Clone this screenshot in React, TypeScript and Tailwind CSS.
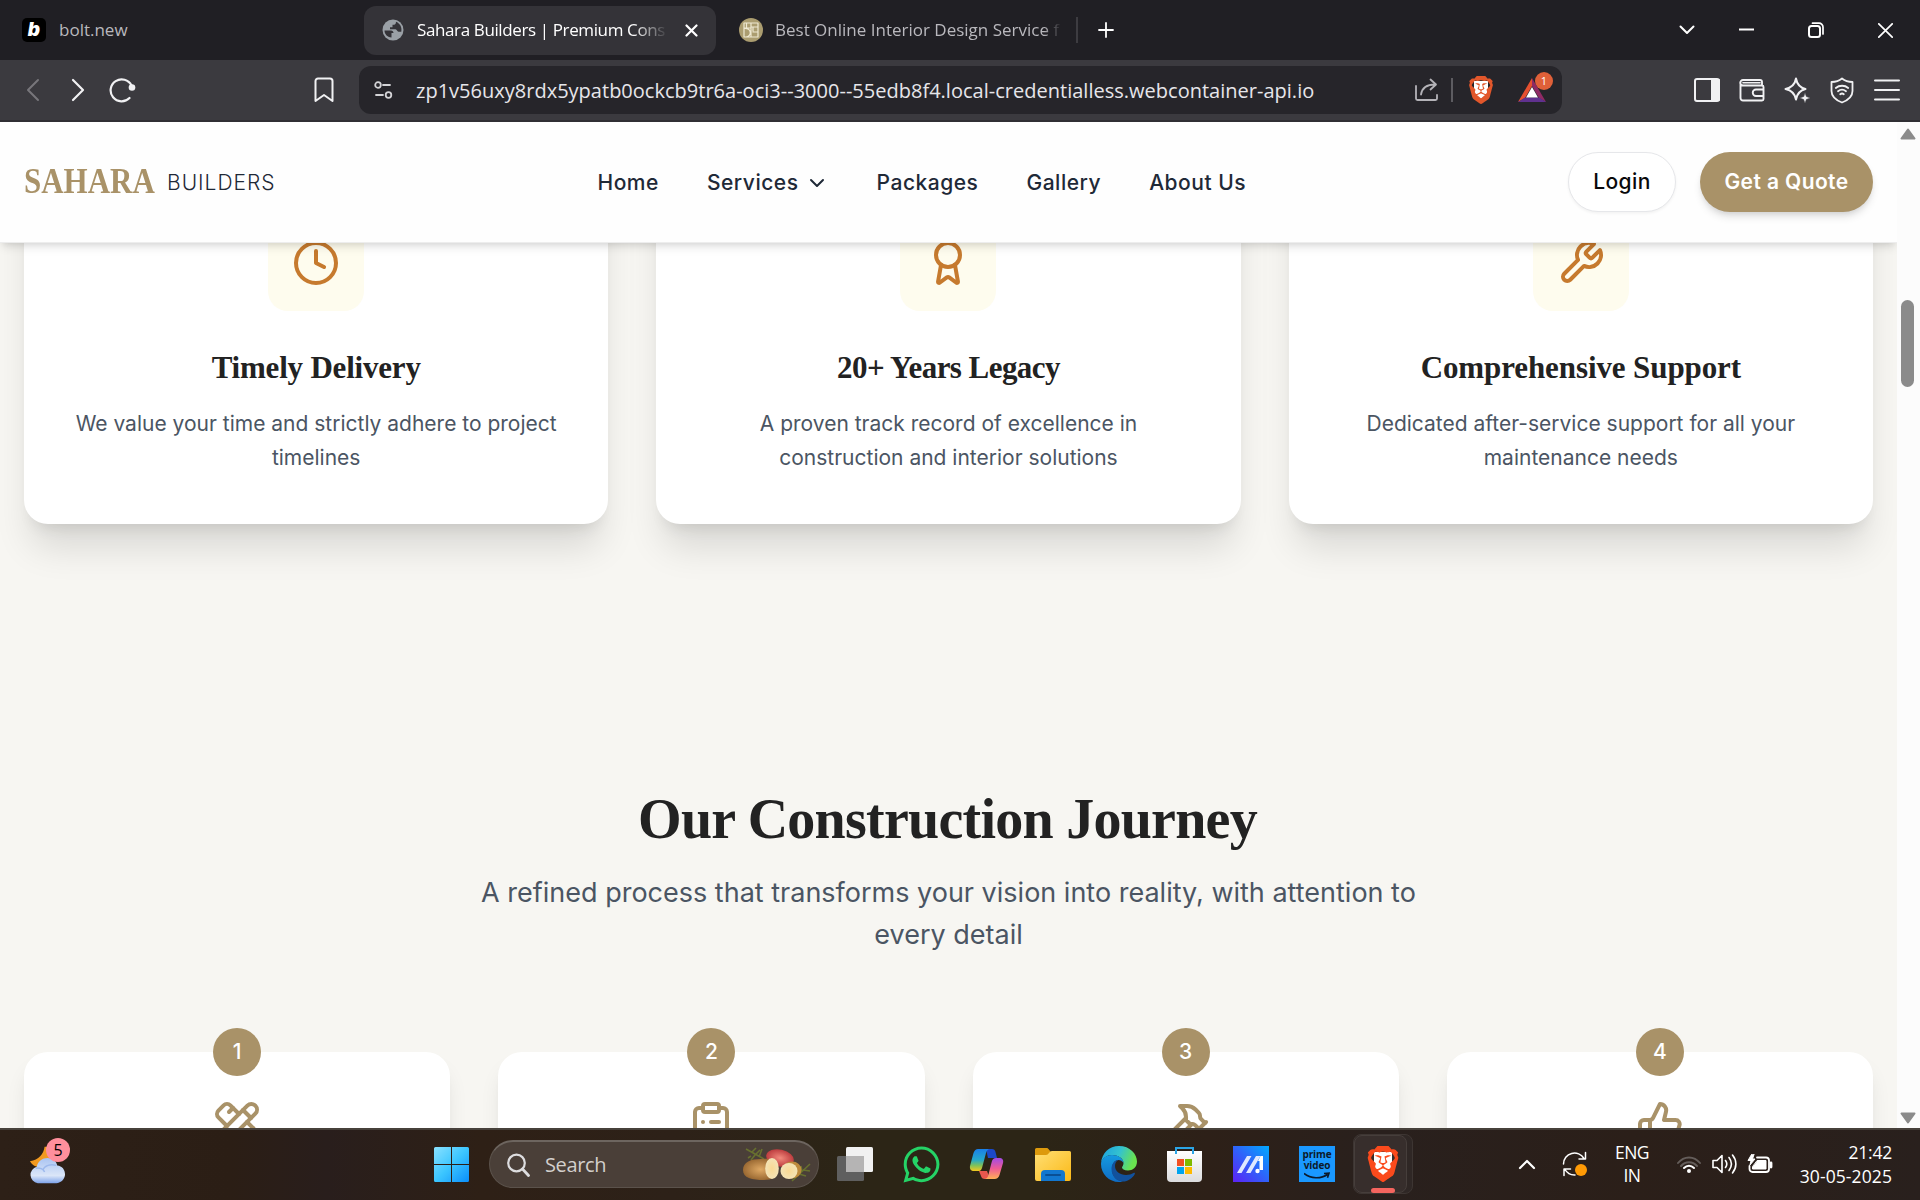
import type { ReactNode } from "react";
import { Award, ChevronDown, ClipboardList, Hammer, PencilRuler, ThumbsUp } from "lucide-react";
import { FaWhatsapp } from "react-icons/fa";
import { SiBrave } from "react-icons/si";

const UI = "font-['Open_Sans',sans-serif]";
const SERIF = "font-['Liberation_Serif',serif] font-bold";

type BoxProps = { w: number; h: number; className?: string; children: ReactNode };

function Glyph({ w, h, className = "", children }: BoxProps) {
  return (
    <svg
      width={w}
      height={h}
      viewBox={`0 0 ${w} ${h}`}
      fill="none"
      stroke="currentColor"
      strokeWidth={2}
      strokeLinecap="round"
      strokeLinejoin="round"
      className={`block shrink-0 ${className}`}
    >
      {children}
    </svg>
  );
}

function BraveLogo({ className, faceClass, color }: { className: string; faceClass: string; color: string }) {
  return (
    <span className={`relative flex shrink-0 items-center justify-center ${className}`}>
      <span className={`absolute bg-white ${faceClass}`} />
      <SiBrave className="relative h-full w-full" color={color} />
    </span>
  );
}

function TabStrip() {
  return (
    <div className={`flex h-[60px] items-center bg-[#201f24] text-[17px] text-[#b9b8bd] ${UI}`}>
      <div className="flex w-[364px] shrink-0 items-center pl-[22px]">
        <div className="flex h-6 w-6 items-center justify-center rounded-[5px] bg-black font-['Inter'] text-[19px] leading-none font-black text-white italic">
          <span className="-mt-0.5">b</span>
        </div>
        <span className="ml-[13px]">bolt.new</span>
      </div>
      <div className="flex h-[49px] w-[352px] shrink-0 items-center rounded-xl bg-[#343338] text-white">
        <Glyph w={22} h={22} className="ml-[18px]">
          <circle cx="11" cy="11" r="10.5" fill="#9aa0a6" stroke="none" />
          <path d="M2.500 11.500H9c1.500 0 2.500 1 2.500 2.500H9.500v4.500C5 18 2.500 15 2.500 11.500z" fill="#343338" stroke="none" />
          <path d="M14 2.800c0 2.500-1 3-3.500 3v2.400H8v2h5.500c1.500 0 1.500 2.500 3 2.500h2.800c1-5-1.800-8.500-5.300-9.900z" fill="#343338" stroke="none" />
        </Glyph>
        <div className="ml-[13px] w-[251px] overflow-hidden whitespace-nowrap tracking-[-0.38px] [mask-image:linear-gradient(to_right,#000_86%,transparent)]">
          Sahara Builders | Premium Cons
        </div>
        <Glyph w={13} h={13} className="ml-[17px]">
          <path d="M1.500 1.500l10 10M11.500 1.500l-10 10" strokeWidth="2.200" />
        </Glyph>
      </div>
      <div className="flex w-[362px] shrink-0 items-center border-r-2 border-[#3d3c41] pl-[23px]">
        <Glyph w={24} h={24}>
          <circle cx="12" cy="12" r="12" fill="#ab9d70" stroke="none" />
          <path d="M5 5h14v14H5zM5 10h7M12 5v14M12 9h7M14 14h5M14 9v4M5 10.500c8-1 8 8 2 8.500M7.500 5v5" stroke="#efe9d2" strokeWidth="1.200" />
        </Glyph>
        <div className="ml-[12px] w-[286px] overflow-hidden whitespace-nowrap [mask-image:linear-gradient(to_right,#000_94%,transparent)]">
          Best Online Interior Design Service f
        </div>
      </div>
      <Glyph w={16} h={16} className="ml-5 text-white">
        <path d="M8 1v14M1 8h14" strokeWidth="1.800" />
      </Glyph>
      <div className="ml-auto flex items-center pr-[27px] text-white">
        <Glyph w={16} h={10}>
          <path d="M1.500 1.500L8 8l6.500-6.500" />
        </Glyph>
        <Glyph w={16} h={16} className="ml-11">
          <path d="M0 7.500h15" strokeLinecap="butt" />
        </Glyph>
        <Glyph w={16} h={16} className="ml-[53px]">
          <rect x="1" y="4" width="11" height="11" rx="2.500" />
          <path d="M4.500 1.200H11a4 4 0 0 1 4 4V12" strokeWidth="1.700" />
        </Glyph>
        <Glyph w={15} h={15} className="ml-[54px]">
          <path d="M.8.8l13.400 13.400M14.200.8L.8 14.200" strokeWidth="1.700" />
        </Glyph>
      </div>
    </div>
  );
}

function Toolbar() {
  return (
    <div className="flex h-[62px] items-center border-b-2 border-[#302f34] bg-[#3b3a3f] text-[#f1f1f3]">
      <Glyph w={14} h={24} className="ml-[26px] text-[#77767b]">
        <path d="M12 2L2 12l10 10" />
      </Glyph>
      <Glyph w={14} h={24} className="ml-[31px]">
        <path d="M2 2l10 10L2 22" strokeWidth="2.200" />
      </Glyph>
      <Glyph w={27} h={26} className="ml-6">
        <path d="M22.500 8.500A11 11 0 1 0 20.500 21" strokeWidth="2.200" />
        <circle cx="23" cy="10.500" r="3.300" fill="currentColor" stroke="none" />
      </Glyph>
      <Glyph w={20} h={26} className="ml-[178px]">
        <path d="M1.500 24V4a2.500 2.500 0 0 1 2.500-2.500h12A2.500 2.500 0 0 1 18.500 4v20L10 18z" />
      </Glyph>
      <div className="ml-[25px] flex h-12 w-[1203px] shrink-0 items-center rounded-xl bg-[#26252a]">
        <Glyph w={19} h={18} className="ml-[15px] text-[#d4d4d7]">
          <circle cx="4" cy="4" r="2.800" strokeWidth="1.800" />
          <path d="M9 4h7M2 14h7" strokeWidth="1.800" />
          <circle cx="14.500" cy="14" r="2.800" strokeWidth="1.800" />
        </Glyph>
        <span className={`ml-[23px] w-[999px] pt-px text-xl tracking-[0.012px] whitespace-nowrap text-[#e6e6ea] ${UI}`}>
          zp1v56uxy8rdx5ypatb0ockcb9tr6a-oci3--3000--55edb8f4.local-credentialless.webcontainer-api.io
        </span>
        <Glyph w={23} h={24} className="text-[#b4b3b8]">
          <path d="M1 8v12.500A1.500 1.500 0 0 0 2.500 22h18a1.500 1.500 0 0 0 1.500-1.500V17M6 16.500C7 10 11 6.500 20 6.500M15.500 1.500l5.500 5-5.500 5" strokeWidth="1.800" />
        </Glyph>
        <div className="ml-[13px] h-6 w-0.5 bg-[#5d5c61]" />
        <BraveLogo className="ml-[14px] h-7 w-7" faceClass="h-[19px] w-[14px] rounded-b-lg" color="#e2572b" />
        <div className="relative ml-[23px] h-[26px] w-8">
          <Glyph w={28} h={26}>
            <path d="M14 1L0 25l7-4 7-12z" fill="#e5502f" stroke="none" />
            <path d="M14 1l14 24-7-4-7-12z" fill="#8f2a63" stroke="none" />
            <path d="M0 25h28l-7-4.500H7z" fill="#60318f" stroke="none" />
            <path d="M14 10l6 10.500H8z" fill="#fff" stroke="none" />
          </Glyph>
          <div className={`absolute -top-[5px] left-[17px] flex h-[18px] w-[18px] items-center justify-center rounded-full bg-[#df6039] text-[11px] text-white ${UI}`}>
            1
          </div>
        </div>
      </div>
      <Glyph w={26} h={24} className="ml-[132px]">
        <rect x="1" y="1" width="24" height="22" rx="2" />
        <path d="M18 2h7v20h-7z" fill="currentColor" />
      </Glyph>
      <Glyph w={26} h={24} className="ml-[19px]">
        <path d="M23 7.500V4a2 2 0 0 0-2-2H4a2.500 2.500 0 0 0 0 5.500h19a1.500 1.500 0 0 1 1.500 1.500v12a1.500 1.500 0 0 1-1.500 1.500H4A2.500 2.500 0 0 1 1.500 20V4.500M24 11.500h-7a3.200 3.200 0 0 0 0 6.500h7" strokeWidth="1.900" />
        <path d="M4 4.800h17" strokeWidth="1.600" />
      </Glyph>
      <Glyph w={26} h={26} className="ml-[19px]">
        <path d="M12 1.500c1 6 3.500 9 9.500 10.500-6 1.500-8.500 4.500-9.500 10.500-1-6-4-9-10.500-10.500C8 10.500 11 7.500 12 1.500z" />
        <path d="M21 15.500l1.400 4L26.500 21l-4.100 1.500L21 26.500l-1.400-4L15.500 21l4.100-1.500z" fill="currentColor" stroke="#3b3a3f" strokeWidth=".6" />
      </Glyph>
      <Glyph w={24} h={27} className="ml-5">
        <path d="M12 1.500c3 2.500 6 3.500 10.500 3.500v9c0 5.500-4 9-10.500 11.500C5.500 23 1.500 19.500 1.500 14V5C6 5 9 4 12 1.500z" strokeWidth="1.800" />
        <path d="M5.800 11c3.500-3 9-3 12.400 0M8 14.200c2.500-2 5.500-2 8 0M10.200 17.200c1.200-.9 2.500-.9 3.600 0" strokeWidth="1.800" />
      </Glyph>
      <Glyph w={26} h={22} className="ml-5">
        <path d="M1 1.500h24M1 11h24M1 20.500h24" />
      </Glyph>
    </div>
  );
}

function SiteHeader() {
  return (
    <header className="relative z-10 flex h-[121px] shrink-0 items-center border-b border-[#ededed] bg-[#fefefe] px-6 font-['Inter',sans-serif] text-[21px] font-medium tracking-[0.52px] text-[#1f2937] shadow-[0_6px_9px_-1.5px_rgba(0,0,0,0.1),0_3px_6px_-3px_rgba(0,0,0,0.1)]">
      <div className="flex w-[573.5px] shrink-0 items-center">
        <div className="w-[131px] pt-px">
          <span className={`inline-block origin-left scale-x-[0.86] text-[36px] leading-none tracking-normal text-[#a99268] ${SERIF}`}>
            SAHARA
          </span>
        </div>
        <span className="ml-3 pt-px font-light tracking-[1px]">BUILDERS</span>
      </div>
      <nav className="flex items-center gap-12 pt-px whitespace-nowrap">
        <span>Home</span>
        <span className="flex items-center gap-1.5">
          Services
          <ChevronDown size={24} strokeWidth={2} />
        </span>
        <span>Packages</span>
        <span>Gallery</span>
        <span>About Us</span>
      </nav>
      <div className="ml-auto flex items-center gap-6 whitespace-nowrap">
        <div className="flex h-[60px] w-[108px] items-center justify-center rounded-full border-[1.5px] border-[#e6e7ea] bg-white tracking-[0.4px] text-[#09090b] shadow-[0_1.5px_3px_rgba(0,0,0,0.05)]">
          Login
        </div>
        <div className="flex h-[60px] w-[173px] items-center justify-center rounded-full bg-[#a99268] font-semibold tracking-[0.4px] text-white shadow-[0_6px_9px_-1.5px_rgba(0,0,0,0.12),0_3px_6px_-3px_rgba(0,0,0,0.12)]">
          Get a Quote
        </div>
      </div>
    </header>
  );
}

function ClockIcon() {
  return (
    <svg width="48" height="48" viewBox="0 0 24 24" fill="none" stroke="currentColor" strokeWidth="2" strokeLinecap="round" strokeLinejoin="round">
      <circle cx="12" cy="12" r="10" />
      <polyline points="12 6 12 12 16 14" />
    </svg>
  );
}

function WrenchIcon() {
  return (
    <svg width="48" height="48" viewBox="0 0 24 24" fill="none" stroke="currentColor" strokeWidth="2" strokeLinecap="round" strokeLinejoin="round">
      <path d="M14.700 6.300a1 1 0 0 0 0 1.400l1.600 1.600a1 1 0 0 0 1.400 0l3.770-3.770a6 6 0 0 1-7.940 7.940l-6.910 6.910a2.120 2.120 0 0 1-3-3l6.910-6.910a6 6 0 0 1 7.940-7.940l-3.760 3.760z" />
    </svg>
  );
}

type FeatureProps = { icon: ReactNode; title: string; tracking: string; lines: string[] };

function FeatureCard({ icon, title, tracking, lines }: FeatureProps) {
  return (
    <article className="flex h-[357px] flex-col items-center rounded-3xl bg-white pt-12 text-center shadow-[0_30px_37.5px_-7.5px_rgba(0,0,0,0.12),0_12px_15px_-9px_rgba(0,0,0,0.1)]">
      <div className="flex h-24 w-24 shrink-0 items-center justify-center rounded-[20px] bg-[#fefcee] text-[#c67a2e]">
        {icon}
      </div>
      <h3 className={`mt-9 text-[31px] leading-[42px] whitespace-nowrap text-[#222] ${SERIF} ${tracking}`}>{title}</h3>
      <p className="mt-[18px] text-[21px] leading-[34px] text-[#4b5563]">
        {lines.map((line) => (
          <span key={line} className="block whitespace-nowrap">
            {line}
          </span>
        ))}
      </p>
    </article>
  );
}

const features: FeatureProps[] = [
  {
    icon: <ClockIcon />,
    title: "Timely Delivery",
    tracking: "tracking-[-0.2px]",
    lines: ["We value your time and strictly adhere to project", "timelines"],
  },
  {
    icon: <Award size={48} />,
    title: "20+ Years Legacy",
    tracking: "tracking-[-0.55px]",
    lines: ["A proven track record of excellence in", "construction and interior solutions"],
  },
  {
    icon: <WrenchIcon />,
    title: "Comprehensive Support",
    tracking: "tracking-[-0.1px]",
    lines: ["Dedicated after-service support for all your", "maintenance needs"],
  },
];

const steps = [PencilRuler, ClipboardList, Hammer, ThumbsUp];

function Page() {
  return (
    <div className="flex h-[1006px] w-[1897px] shrink-0 flex-col overflow-hidden bg-[#f7f6f2] font-['Inter',sans-serif]">
      <SiteHeader />
      <main className="min-h-0 flex-1 overflow-hidden">
        <section className="-mt-[76px] grid grid-cols-3 gap-12 px-6">
          {features.map((f) => (
            <FeatureCard key={f.title} {...f} />
          ))}
        </section>
        <section className="mt-[265px] text-center">
          <h2 className={`pr-0.5 text-[56px] leading-[60px] tracking-[-0.75px] text-[#222] ${SERIF}`}>Our Construction Journey</h2>
          <p className="mt-[23px] text-[27px] leading-[42px] text-[#4b5563]">
            <span className="block">A refined process that transforms your vision into reality, with attention to</span>
            <span className="block">every detail</span>
          </p>
        </section>
        <section className="mt-24 grid grid-cols-4 gap-12 px-6">
          {steps.map((Icon, i) => (
            <article
              key={i}
              className="relative flex h-[300px] flex-col items-center rounded-3xl bg-white pt-12 text-[#a99268] shadow-[0_15px_22.5px_-4.500px_rgba(0,0,0,0.1),0_6px_9px_-6px_rgba(0,0,0,0.1)]"
            >
              <div className="absolute -top-6 flex h-12 w-12 items-center justify-center rounded-full bg-[#a99268] text-[21px] font-medium text-white">
                {i + 1}
              </div>
              <Icon size={48} />
            </article>
          ))}
        </section>
      </main>
    </div>
  );
}

function Scrollbar() {
  return (
    <div className="flex h-[1006px] flex-1 flex-col items-center bg-[#fcfcfc] pt-1.5 pb-[4px] pr-0.5 text-[#8b8b8b]">
      <Glyph w={16} h={12}>
        <path d="M8 1.500L14.500 10.500h-13z" fill="currentColor" />
      </Glyph>
      <div className="mt-40 h-[87px] w-[13px] rounded-full bg-[#8b8b8b]" />
      <Glyph w={16} h={12} className="mt-auto">
        <path d="M8 10.500L1.500 1.500h13z" fill="currentColor" />
      </Glyph>
    </div>
  );
}

function WeatherWidget() {
  return (
    <div className="relative ml-[29px] h-[52px] w-11 shrink-0">
      <svg width="37" height="41" viewBox="0 0 38 44" preserveAspectRatio="none" className="mt-1.5 block">
        <defs>
          <linearGradient id="cloud" x1="0" y1="0" x2="0" y2="1">
            <stop offset="0" stopColor="#aac4f2" />
            <stop offset=".7" stopColor="#dbe6f8" />
            <stop offset="1" stopColor="#7fa4ea" />
          </linearGradient>
        </defs>
        <path d="M16 3c-1 8-6 14-15 15.500 3 6 10 8 17 5s9-9 7-15S18 3 16 3z" fill="#f29a20" />
        <path d="M9 42a9 9 0 0 1-1-17.500C9 18 14 15 19 15c5 0 9 3 10 8 5 .5 8 4.500 8 9.500S33 42 28 42z" fill="url(#cloud)" />
        <path d="M7 26c4-1 8 1 9 4M14 28c2-5 8-7 14-5" stroke="#9db9ec" strokeWidth="1.500" fill="none" />
      </svg>
      <div className={`absolute top-0 left-[17px] flex h-6 w-6 items-center justify-center rounded-full bg-[#ff8f9c] text-base text-black ${UI}`}>
        5
      </div>
    </div>
  );
}

function Potatoes() {
  return (
    <svg width="70" height="36" viewBox="0 0 70 36" className="block shrink-0">
      <defs>
        <radialGradient id="skin">
          <stop offset="0" stopColor="#dfa964" />
          <stop offset="1" stopColor="#9b6a33" />
        </radialGradient>
        <radialGradient id="flesh">
          <stop offset="0" stopColor="#f9d994" />
          <stop offset="1" stopColor="#f3e3b6" />
        </radialGradient>
        <radialGradient id="red">
          <stop offset="0" stopColor="#f28a7c" />
          <stop offset="1" stopColor="#bd3d3f" />
        </radialGradient>
      </defs>
      <path d="M4 2l18 10M9 9l-3 2M10 5l4-4M13 8l5-5M17 10l3-8M13 8l-4 5M50 34l18-17M57 27l7 2M61 23l7 1M60 25l-1-6" stroke="#67702f" strokeWidth="1.600" fill="none" />
      <ellipse cx="38" cy="11" rx="14" ry="8.500" fill="url(#red)" transform="rotate(12 38 11)" />
      <path d="M1 23c0-8 8-11 18-11 8-1 16 1 17 9 0 9-6 12-14 12C10 33 1 31 1 23z" fill="url(#skin)" />
      <ellipse cx="30" cy="21.500" rx="6.800" ry="10.500" fill="url(#flesh)" />
      <ellipse cx="50" cy="23" rx="9.500" ry="8.500" fill="#bd8a3c" />
      <ellipse cx="47" cy="24" rx="8.500" ry="8" fill="url(#flesh)" />
    </svg>
  );
}

function PinnedApps() {
  return (
    <div className="ml-[18px] flex shrink-0 items-center gap-[30px]">
      <svg width="36" height="36" viewBox="0 0 36 36" className="block">
        <rect x="9" y="1" width="27" height="25" rx="1.500" fill="#f1f1f1" />
        <rect x="0" y="10" width="27" height="25" rx="1.500" fill="#5f5f5f" />
        <path d="M9 10h18v16H9z" fill="#b5b4b4" />
      </svg>
      <span className="relative flex h-9 w-9 items-center justify-center">
        <FaWhatsapp size={41} color="#25d366" className="absolute" />
      </span>
      <svg width="36" height="36" viewBox="0 0 36 36" className="block">
        <defs>
          <linearGradient id="cpl" x1="0" y1="0" x2="0" y2="1">
            <stop offset="0" stopColor="#1a7fe8" />
            <stop offset=".5" stopColor="#25a9c9" />
            <stop offset=".75" stopColor="#7fc25a" />
            <stop offset="1" stopColor="#f4c81e" />
          </linearGradient>
          <linearGradient id="cpr" x1="0" y1="0" x2="0" y2="1">
            <stop offset="0" stopColor="#a24be6" />
            <stop offset=".5" stopColor="#ef5b95" />
            <stop offset="1" stopColor="#ffb056" />
          </linearGradient>
        </defs>
        <path d="M17 3h6c2 0 3 1 3.500 3l1.500 6h-9z" fill="#1b49c8" />
        <path d="M9 3h12c-2 0-3.500 2-4 4l-4 15c-.8 2.500-2 3-4 3H5c-3 0-4.500-2-4-5L4.500 7C5.500 4.500 7 3 9 3z" fill="url(#cpl)" />
        <path d="M10 25h8l3 8h-5c-2.500 0-3.500-1-4-3z" fill="#e8574e" />
        <path d="M27 12h3c3.500 0 4.800 2 4 5l-3.500 12c-.8 2.500-2.500 4-5 4H15c2.500 0 3.800-1.500 4.300-4l3.400-13c.6-2.500 2-4 4.300-4z" fill="url(#cpr)" />
      </svg>
      <svg width="36" height="36" viewBox="0 0 36 36" className="block">
        <defs>
          <linearGradient id="fld" x1="0" y1="0" x2="1" y2="1">
            <stop offset="0" stopColor="#ffdf75" />
            <stop offset="1" stopColor="#fbb917" />
          </linearGradient>
        </defs>
        <path d="M0 3.500A1.500 1.500 0 0 1 1.500 2h10c1 0 1.500.5 2 1l2 2.500V12H0z" fill="#dd9a0d" />
        <path d="M0 9h11c1.500 0 2-.8 3-2s1.500-2 3-2h17.500A1.500 1.500 0 0 1 36 6.500V33a2 2 0 0 1-2 2H2a2 2 0 0 1-2-2z" fill="url(#fld)" />
        <path d="M6 35v-7a4 4 0 0 1 4-4h16a4 4 0 0 1 4 4v7z" fill="#1277cf" />
        <path d="M11 29h14" stroke="#0a4f94" strokeWidth="2" strokeLinecap="round" />
      </svg>
      <svg width="36" height="36" viewBox="0 0 36 36" className="block">
        <defs>
          <linearGradient id="edg" x1="0" y1="0" x2="1" y2=".3">
            <stop offset="0" stopColor="#1a9fe0" />
            <stop offset=".55" stopColor="#34c2cf" />
            <stop offset="1" stopColor="#69e34f" />
          </linearGradient>
          <linearGradient id="edb" x1="0" y1="0" x2="0" y2="1">
            <stop offset="0" stopColor="#159ae0" />
            <stop offset="1" stopColor="#0f6cc4" />
          </linearGradient>
        </defs>
        <path d="M0 17C1 7 8 0 18 0c11 0 18 8 18 15.500 0 6-4.500 9-9 9-4 0-6-1.500-6-3 0-1 1.500-1.700 1.500-4.500 0-5-6-8-11.500-8C6 9 1.500 12 0 17z" fill="url(#edg)" />
        <path d="M0 18c0-5 5-9 11-9s11.500 3.500 11.500 8c-1-2-3-3-5-3-4 0-6.500 4-6.500 9 0 7 5 12 11 12.500-2 .5-3 .5-4 .5C8 36 0 28 0 18z" fill="url(#edb)" />
        <path d="M17.500 14c-2.500 1-3.500 3.500-3.500 6 0 5.500 5 9 11 9 3 0 5.500-1 7.500-2 1.200-.6 1.800.2 1.200 1.200C31.500 32 27 35.500 22 35.500 15.500 35.500 10.500 30 10.500 23c0-5 3-9 7-9z" fill="#12519c" />
      </svg>
      <svg width="36" height="36" viewBox="0 0 36 36" className="block">
        <defs>
          <linearGradient id="str" x1="0" y1="0" x2="0" y2="1">
            <stop offset="0" stopColor="#fff" />
            <stop offset="1" stopColor="#dcdcde" />
          </linearGradient>
        </defs>
        <path d="M0 5h35v27a4 4 0 0 1-4 4H4a4 4 0 0 1-4-4z" fill="url(#str)" />
        <path d="M9 8V2h17v6" stroke="#2ba5e6" strokeWidth="2" fill="none" />
        <path d="M10 13h7v7h-7z" fill="#f25022" />
        <path d="M18 13h7v7h-7z" fill="#7fba00" />
        <path d="M10 21h7v7h-7z" fill="#00a4ef" />
        <path d="M18 21h7v7h-7z" fill="#ffb900" />
      </svg>
      <svg width="36" height="36" viewBox="0 0 36 36" className="block">
        <defs>
          <linearGradient id="mya" x1="0" y1="1" x2="1" y2="0">
            <stop offset="0" stopColor="#5d22f5" />
            <stop offset=".5" stopColor="#2f62fa" />
            <stop offset="1" stopColor="#00aaff" />
          </linearGradient>
        </defs>
        <path d="M0 0h36v36H0z" fill="url(#mya)" />
        <path d="M4 27L14 10h4.500L8.500 27zM13 27l10-17h4.500l-10 17z" fill="#dfe8ff" />
        <path d="M25 15l2.500-5H30v14h-3.500v-9z" fill="#fff" />
        <circle cx="24.500" cy="25" r="2.200" fill="#fff" />
      </svg>
      <div className="flex h-9 w-9 flex-col items-center bg-[#1a98ff] pt-[3px] font-['Open_Sans'] text-[10px] leading-[11px] font-bold tracking-[-0.1px] text-[#0c1a2b]">
        <span className="h-[11px]">prime</span>
        <span className="h-[11px]">video</span>
        <svg width="26" height="8" viewBox="0 0 26 8" fill="none" stroke="#0c1a2b" strokeWidth="1.600" className="mt-px block">
          <path d="M0 1.500c7 5.500 17 5.500 23.500 1M20 1.500l5-.3-1.500 4.500" />
        </svg>
      </div>
    </div>
  );
}

function Taskbar() {
  return (
    <div
      className={`flex h-[72px] items-center border-t-2 border-[#47413b] bg-[linear-gradient(90deg,#2d2017_0%,#2b1e15_12%,#291e1c_17%,#2e2016_25%,#2d2118_35%,#2c2516_45%,#2c2516_54%,#2d2018_63%,#29201d_72%,#2b1f19_85%,#29201d_100%)] pb-0.5 text-white ${UI}`}
    >
      <WeatherWidget />
      <svg width="35" height="35" viewBox="0 0 35 35" className="ml-[361px] block shrink-0">
        <defs>
          <linearGradient id="win" x1="0" y1="0" x2="1" y2="1">
            <stop offset="0" stopColor="#8ae1ff" />
            <stop offset=".5" stopColor="#3cc6ff" />
            <stop offset="1" stopColor="#0a8efb" />
          </linearGradient>
        </defs>
        <path d="M1.500 0H17v17H0V1.500A1.500 1.500 0 0 1 1.500 0zM18 0h15.500A1.500 1.500 0 0 1 35 1.500V17H18zM0 18h17v17H1.500A1.500 1.500 0 0 1 0 33.500zM18 18h17v15.500a1.500 1.500 0 0 1-1.500 1.500H18z" fill="url(#win)" />
      </svg>
      <div className="ml-5 flex h-12 w-[330px] shrink-0 items-center rounded-full border-[1.5px] border-t-2 border-[#5b524b] border-t-[#6d655f] bg-[#4a3f38]">
        <Glyph w={23} h={24} className="ml-[17px] text-[#dddddf]">
          <circle cx="9.500" cy="10" r="8.300" strokeWidth="2.200" />
          <path d="M15.500 16l6 6.500" strokeWidth="2.800" />
        </Glyph>
        <span className="ml-[15px] text-xl tracking-[-0.35px] text-[#d3cfcc]">Search</span>
        <div className="mr-[6px] ml-auto">
          <Potatoes />
        </div>
      </div>
      <PinnedApps />
      <div className="ml-[18px] flex h-[60px] w-[60px] shrink-0 rounded-lg border border-[#3d3532] bg-[#2f2725]">
        <div className="relative flex h-[58px] w-[53px] items-center justify-center rounded-lg border border-[#463e3b] bg-[#372e2c] pl-1">
          <BraveLogo className="h-9 w-9" faceClass="h-[24px] w-[18px] rounded-b-xl" color="#fb4a1c" />
          <div className="absolute -bottom-px left-[16px] h-[5px] w-6 rounded-full bg-[#f4655f]" />
        </div>
      </div>
      <div className="ml-auto flex items-center pr-7">
        <Glyph w={18} h={11}>
          <path d="M2 9l7-7 7 7" strokeWidth="2.200" />
        </Glyph>
        <Glyph w={26} h={26} className="ml-[26px]">
          <path d="M1.500 13A11 11 0 0 1 22 7.500M23.500 1.500V8H17M2 24.500V18h6.500M3 18.500a11 11 0 0 0 10 5.500" strokeWidth="1.500" />
          <circle cx="19" cy="19" r="6" fill="#ff9a05" stroke="none" />
        </Glyph>
        <div className="ml-[24px] w-[40px] text-center text-[17.500px] leading-[23px] tracking-[-0.5px]">
          <div>ENG</div>
          <div>IN</div>
        </div>
        <Glyph w={26} h={19} className="ml-6">
          <path d="M2 8c6-7.500 16-7.500 22 0" stroke="#645d5a" />
          <path d="M5 11c4.500-5 11.500-5 16 0" stroke="#645d5a" />
          <path d="M8 13c3-3 7-3 10 0" />
          <circle cx="13" cy="16" r="2" fill="currentColor" stroke="none" />
        </Glyph>
        <Glyph w={25} h={22} className="ml-[10px]">
          <path d="M1 7.500h4l5-5v17l-5-5H1z" strokeWidth="1.600" />
          <path d="M13.500 7.500c1.500 2 1.500 5 0 7M17 4.500c3 4 3 9 0 13M20.500 2c4.500 5.500 4.500 12.500 0 18" strokeWidth="1.600" />
        </Glyph>
        <Glyph w={26} h={21} className="ml-[10px]">
          <path d="M10 3.500h9a3 3 0 0 1 3 3V15a3 3 0 0 1-3 3H5.500a3 3 0 0 1-3-3v-3" strokeWidth="1.800" />
          <path d="M10.500 6.500h8.500v8.500H5.500V13z" fill="currentColor" strokeWidth="1" />
          <path d="M24 9v4" strokeWidth="2.800" />
          <path d="M4.500.5L1 6.500h3L3 11l5-6H5.500L7 .5z" fill="currentColor" strokeWidth="1" />
        </Glyph>
        <div className="ml-6 w-[95px] text-right text-[17.500px] leading-6 tracking-[0.1px] whitespace-nowrap">
          <div className="tracking-[-0.2px]">21:42</div>
          <div>30-05-2025</div>
        </div>
      </div>
    </div>
  );
}

export default function App() {
  return (
    <div className="h-[1200px] w-[1920px] overflow-hidden">
      <TabStrip />
      <Toolbar />
      <div className="flex h-[1006px]">
        <Page />
        <Scrollbar />
      </div>
      <Taskbar />
    </div>
  );
}
